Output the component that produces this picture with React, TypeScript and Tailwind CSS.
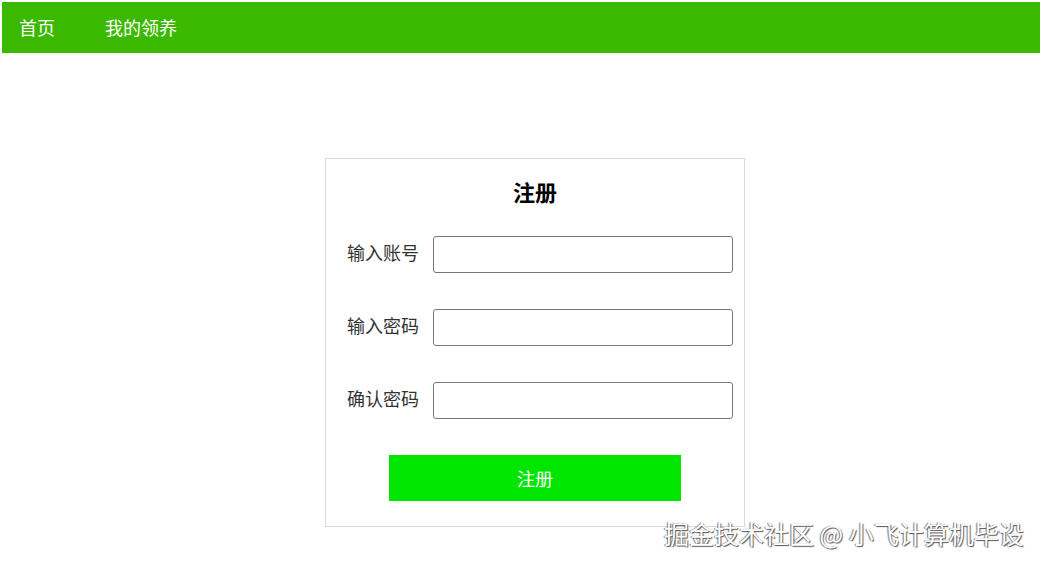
const font = { fontFamily: '"Noto Sans CJK SC", "Liberation Sans", sans-serif' };

function Field({ label }: { label: string }) {
  return (
    <div className="flex items-center">
      <label className="w-[107px] shrink-0 pb-[5px] pl-[21px] text-[18px] leading-[24px] text-[#333]">{label}</label>
      <input
        type="password"
        className="h-[37px] w-[300px] rounded-[3px] border border-[#767676] bg-white px-2 outline-none"
      />
    </div>
  );
}

export default function App() {
  return (
    <div className="relative h-[564px] w-[1042px] bg-white p-[2px]" style={font}>
      <nav className="flex h-[51px] w-[1038px] items-center bg-[#3bb900] pl-[17px] text-[18px] text-white">
        <a className="mr-[50px]">首页</a>
        <a>我的领养</a>
      </nav>

      <div className="flex pt-[105px] pl-[323px]">
        <section className="flex h-[369px] w-[420px] flex-col border border-[#d9d9d9]">
          <h2 className="mt-[17px] text-center text-[22px] font-bold leading-[30px] text-black">注册</h2>
          <div className="mt-[30px] flex flex-col gap-[36px]">
            <Field label="输入账号" />
            <Field label="输入密码" />
            <Field label="确认密码" />
          </div>
          <button
            type="button"
            className="mx-auto mt-[36px] h-[46px] w-[292px] bg-[#00e600] text-[18px] text-white"
          >
            注册
          </button>
        </section>
      </div>

      <div className="pointer-events-none absolute left-[664px] top-[516px] text-[25px] leading-[34px] text-white [text-shadow:1px_1px_1px_#555,-1px_0_1px_#777]">
        掘金技术社区 @ 小飞计算机毕设
      </div>
    </div>
  );
}
